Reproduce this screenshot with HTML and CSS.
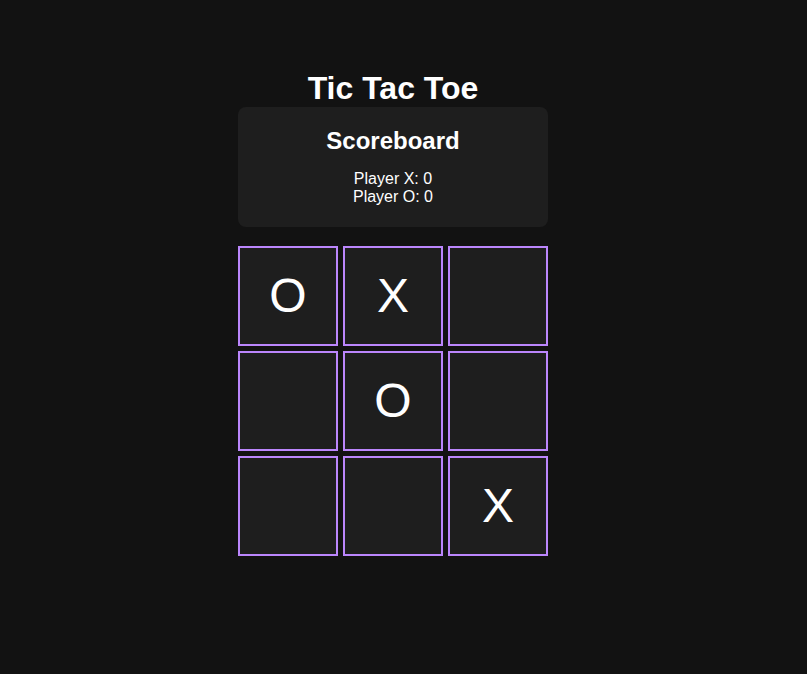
FILE: index.html
```html
<!DOCTYPE html>
<html lang="en">
<head>
<meta charset="utf-8">
<title>Tic Tac Toe</title>
<link rel="stylesheet" href="styles.css">
</head>
<body>
<main class="app">
  <h1 class="title">Tic Tac Toe</h1>
  <section class="scoreboard">
    <h2 class="score-title">Scoreboard</h2>
    <div class="score-line">Player X: 0</div>
    <div class="score-line">Player O: 0</div>
  </section>
  <div class="board">
    <div class="cell">O</div>
    <div class="cell">X</div>
    <div class="cell"></div>
    <div class="cell"></div>
    <div class="cell">O</div>
    <div class="cell"></div>
    <div class="cell"></div>
    <div class="cell"></div>
    <div class="cell">X</div>
  </div>
</main>
</body>
</html>
```

FILE: styles.css
```css
html, body {
  margin: 0;
  padding: 0;
  background: #121212;
  color: #ffffff;
  font-family: "Liberation Sans", Arial, sans-serif;
}

.app {
  display: flex;
  flex-direction: column;
  align-items: center;
  padding-top: 69px;
  padding-right: 21px;
}

.title {
  margin: 0;
  font-size: 32px;
  font-weight: bold;
  line-height: 38px;
}

.scoreboard {
  box-sizing: border-box;
  width: 310px;
  background: #1e1e1e;
  border-radius: 8px;
  padding: 20px 20px 21px;
  text-align: center;
  margin-bottom: 19px;
}

.score-title {
  margin: 0 0 15px;
  font-size: 24px;
  font-weight: bold;
  line-height: 28px;
}

.score-line {
  font-size: 16px;
  line-height: 18px;
}

.board {
  display: grid;
  grid-template-columns: repeat(3, 100px);
  grid-template-rows: repeat(3, 100px);
  gap: 5px;
}

.cell {
  box-sizing: border-box;
  background: #1e1e1e;
  border: 2px solid #bb86fc;
  display: flex;
  align-items: center;
  justify-content: center;
  font-size: 48px;
  line-height: 1;
}
```
